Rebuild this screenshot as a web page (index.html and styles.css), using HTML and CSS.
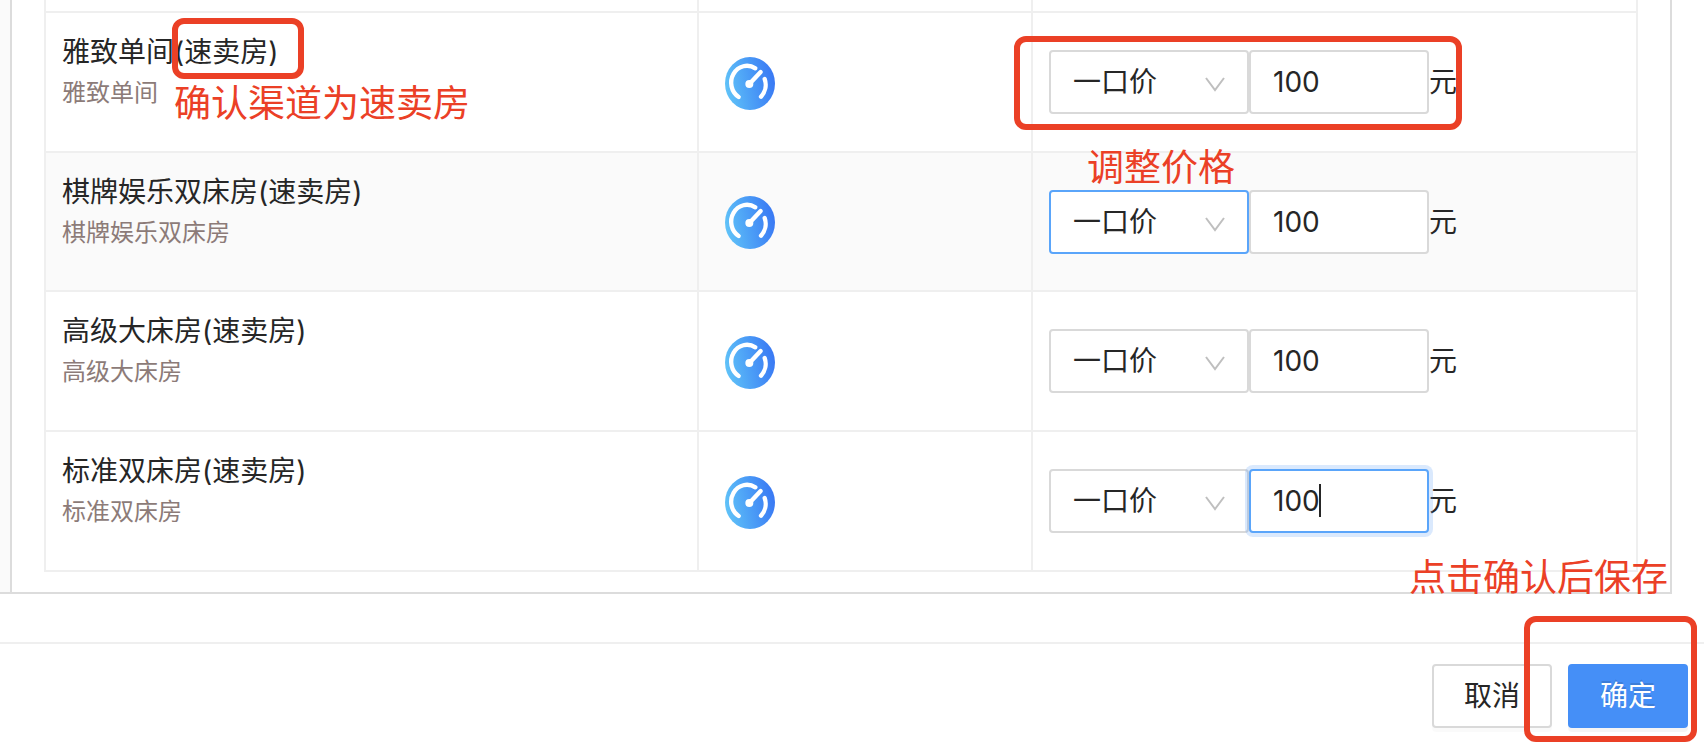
FILE: index.html
```
<!DOCTYPE html>
<html lang="zh-CN">
<head>
    <meta charset="UTF-8">
    <meta name="viewport" content="width=device-width, initial-scale=1.0">
    <title>调整价格</title>
    <link rel="stylesheet" href="styles.css">
</head>
<body>
    <!-- shared icons -->
    <svg class="sprite" width="0" height="0">
        <defs>
            <linearGradient id="gaugeFill" x1="0" y1="0.6" x2="1" y2="0.4">
                <stop offset="0" stop-color="#60c3f8"/>
                <stop offset="0.5" stop-color="#4b9df6"/>
                <stop offset="1" stop-color="#3978f4"/>
            </linearGradient>
        </defs>
        <symbol id="gauge" viewBox="0 0 150 159" preserveAspectRatio="none">
            <ellipse cx="75" cy="79.5" rx="75" ry="79.5" fill="url(#gaugeFill)"/>
            <g fill="none" stroke="#fff" stroke-width="13" stroke-linecap="round">
                <path d="M41 120A47 50 0 0 1 91 34"/>
                <path d="M119 66A47 50 0 0 1 108 119"/>
                <path d="M73 81L107 45"/>
            </g>
            <circle cx="73" cy="81" r="12" fill="#fff"/>
        </symbol>
        <symbol id="arrow" viewBox="0 0 20 15">
            <path d="M1 1L10 13L19 1" fill="none" stroke="#bfbfbf" stroke-width="2"/>
        </symbol>
    </svg>

    <main class="content">
        <div class="side"></div>
        <div class="panel">
            <table class="rooms">
                <colgroup>
                    <col class="col-name">
                    <col class="col-channel">
                    <col>
                </colgroup>
                <thead>
                    <tr><th></th><th></th><th></th></tr>
                </thead>
                <tbody>
                    <tr>
                        <td class="name">
                            <div class="title" id="room1">雅致单间(速卖房)</div>
                            <div class="sub">雅致单间</div>
                            <span class="mark mark-channel"></span>
                            <span class="note note-channel">确认渠道为速卖房</span>
                        </td>
                        <td class="channel"><svg class="gauge"><use href="#gauge"/></svg></td>
                        <td class="price">
                            <div class="price-row">
                                <div class="select">
                                    <select aria-labelledby="room1"><option>一口价</option></select>
                                    <svg class="arrow"><use href="#arrow"/></svg>
                                </div>
                                <div class="amount"><input type="text" id="price1" value="100"></div>
                                <label for="price1">元</label>
                            </div>
                            <span class="mark mark-price"></span>
                            <span class="note note-price">调整价格</span>
                        </td>
                    </tr>
                    <tr class="hover">
                        <td class="name">
                            <div class="title" id="room2">棋牌娱乐双床房(速卖房)</div>
                            <div class="sub">棋牌娱乐双床房</div>
                        </td>
                        <td class="channel"><svg class="gauge"><use href="#gauge"/></svg></td>
                        <td class="price">
                            <div class="price-row">
                                <div class="select">
                                    <select class="active" aria-labelledby="room2"><option>一口价</option></select>
                                    <svg class="arrow"><use href="#arrow"/></svg>
                                </div>
                                <div class="amount"><input type="text" id="price2" value="100"></div>
                                <label for="price2">元</label>
                            </div>
                        </td>
                    </tr>
                    <tr>
                        <td class="name">
                            <div class="title" id="room3">高级大床房(速卖房)</div>
                            <div class="sub">高级大床房</div>
                        </td>
                        <td class="channel"><svg class="gauge"><use href="#gauge"/></svg></td>
                        <td class="price">
                            <div class="price-row">
                                <div class="select">
                                    <select aria-labelledby="room3"><option>一口价</option></select>
                                    <svg class="arrow"><use href="#arrow"/></svg>
                                </div>
                                <div class="amount"><input type="text" id="price3" value="100"></div>
                                <label for="price3">元</label>
                            </div>
                        </td>
                    </tr>
                    <tr>
                        <td class="name">
                            <div class="title" id="room4">标准双床房(速卖房)</div>
                            <div class="sub">标准双床房</div>
                        </td>
                        <td class="channel"><svg class="gauge"><use href="#gauge"/></svg></td>
                        <td class="price">
                            <div class="price-row">
                                <div class="select">
                                    <select aria-labelledby="room4"><option>一口价</option></select>
                                    <svg class="arrow"><use href="#arrow"/></svg>
                                </div>
                                <div class="amount">
                                    <input class="focused" type="text" id="price4" value="100">
                                    <span class="caret"></span>
                                </div>
                                <label for="price4">元</label>
                            </div>
                        </td>
                    </tr>
                </tbody>
            </table>
        </div>
    </main>

    <footer class="footer">
        <button type="button" class="btn">取消</button>
        <button type="button" class="btn btn-primary">确定</button>
        <span class="mark mark-save"></span>
        <span class="note note-save">点击确认后保存</span>
    </footer>
</body>
</html>
```

FILE: styles.css
```
* {
    box-sizing: border-box;
}
body {
    margin: 0;
    background-color: #fff;
    color: #262626;
    font-family: Inter, "Noto Sans CJK SC", sans-serif;
    font-size: 28px;
    line-height: 42px;
}
.sprite {
    position: absolute;
}
.content {
    display: flex;
    border-bottom: 2px solid #dcdcdc;
    margin-right: 32px;
}
.side {
    width: 10px;
    background-color: #fafafa;
}
.panel {
    flex: 1;
    padding: 0 32px 20px;
    border-left: 2px solid #dcdcdc;
    border-right: 2px solid #dcdcdc;
}

/* room table */
.rooms {
    width: 100%;
    table-layout: fixed;
    border-collapse: separate;
    border-spacing: 0;
    border-left: 2px solid #efefef;
}
.col-name {
    width: 41%;
}
.col-channel {
    width: 21%;
}
.rooms th,
.rooms td {
    position: relative;
    border-right: 2px solid #efefef;
    border-bottom: 2px solid #efefef;
}
.rooms th {
    height: 13px;
    padding: 0;
}
.rooms td {
    height: 140px;
    padding: 0 16px;
}
.rooms .name {
    padding-top: 18px;
    vertical-align: top;
}
.rooms .channel {
    padding-top: 2px;
    padding-left: 26px;
}
.rooms .hover td {
    height: 139px;
    background-color: #fafafa;
}
.sub {
    color: #8c7b78;
    font-size: 24px;
    line-height: 40px;
}
.gauge {
    display: block;
    width: 50px;
    height: 53px;
}

/* price controls */
.price-row {
    display: flex;
    align-items: center;
}
.select {
    position: relative;
    width: 200px;
}
.amount {
    position: relative;
    width: 180px;
}
select,
input {
    display: block;
    width: 100%;
    height: 64px;
    padding: 0 22px;
    border: 2px solid #d9d9d9;
    border-radius: 4px;
    background-color: #fff;
    color: inherit;
    font: inherit;
    appearance: none;
    outline: none;
}
select.active {
    border-color: #5aa5fa;
}
input.focused {
    border-color: #5aa5fa;
    box-shadow: 0 0 0 4px rgba(69, 143, 247, 0.2);
}
.arrow {
    position: absolute;
    top: 27px;
    right: 24px;
    width: 20px;
    height: 15px;
    pointer-events: none;
}
.caret {
    position: absolute;
    top: 15px;
    left: 70px;
    width: 2px;
    height: 33px;
    background-color: #262626;
}

/* footer */
.footer {
    position: relative;
    display: flex;
    justify-content: flex-end;
    gap: 16px;
    margin-top: 48px;
    padding: 20px 16px 14px;
    border-top: 2px solid #efefef;
}
.btn {
    width: 120px;
    height: 64px;
    padding: 0;
    border: 2px solid #d9d9d9;
    border-radius: 4px;
    background-color: #fff;
    box-shadow: 0 4px 0 rgba(0, 0, 0, 0.02);
    color: inherit;
    font: inherit;
    cursor: pointer;
}
.btn-primary {
    border-color: #458ff7;
    background-color: #458ff7;
    box-shadow: 0 4px 0 rgba(0, 0, 0, 0.04);
    color: #fff;
    text-shadow: 0 -2px 0 rgba(0, 0, 0, 0.12);
}

/* red guide marks */
.mark {
    position: absolute;
    z-index: 1;
    border: 6px solid #eb4026;
    border-radius: 12px;
    pointer-events: none;
}
.note {
    position: absolute;
    z-index: 1;
    color: #eb4026;
    font-size: 37px;
    line-height: 40px;
    white-space: nowrap;
}
.mark-channel {
    top: 5px;
    left: 126px;
    width: 132px;
    height: 61px;
}
.note-channel {
    top: 71px;
    left: 128px;
}
.mark-price {
    top: 23px;
    left: -19px;
    width: 448px;
    height: 94px;
}
.note-price {
    top: 135px;
    left: 54px;
}
.mark-save {
    top: -28px;
    right: 7px;
    bottom: 0;
    width: 173px;
}
.note-save {
    top: -86px;
    right: 36px;
}
```
